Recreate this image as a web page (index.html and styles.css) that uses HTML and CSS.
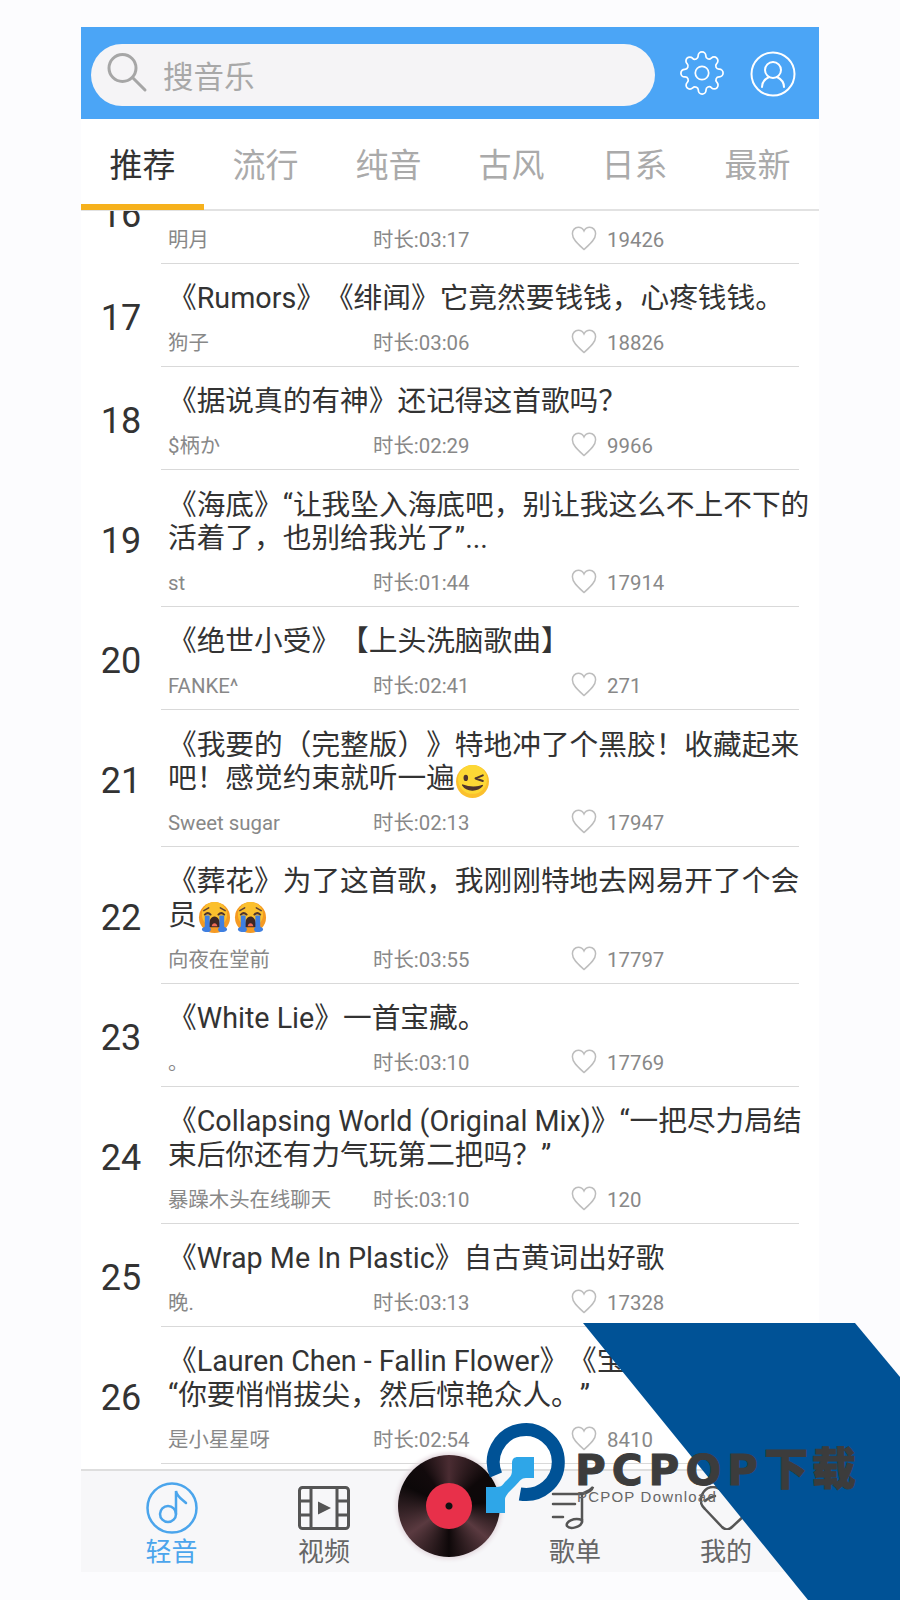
FILE: index.html
```html
<!DOCTYPE html>
<html lang="zh-CN">
<head>
    <meta charset="UTF-8">
    <meta name="viewport" content="width=device-width, initial-scale=1.0">
    <title>轻音</title>
    <link rel="stylesheet" href="styles.css">
</head>
<body>
    <svg class="sprites" width="0" height="0">
        <symbol id="heart" viewBox="0 0 26 25">
            <path d="M13 23.500C8 19 1.400 14 1.400 7.800 1.400 4 4 1.300 7.300 1.300c2.500 0 4.500 1.300 5.700 3.700 1.200-2.400 3.200-3.700 5.700-3.700 3.300 0 5.900 2.700 5.900 6.500 0 6.200-6.600 11.200-11.600 15.700z" fill="none" stroke="#bdbdbd" stroke-width="1.500"/>
        </symbol>
        <symbol id="wink" viewBox="0 0 34 34">
            <circle cx="17" cy="17" r="16" fill="#fbc02d"/>
            <circle cx="17" cy="15" r="14" fill="#fdd835"/>
            <ellipse cx="10.500" cy="13.500" rx="2.200" ry="3" fill="#4e342e"/>
            <path d="M20 14l7-3M20 14l7 2.500" stroke="#4e342e" stroke-width="2" fill="none" stroke-linecap="round"/>
            <path d="M7.500 20.500c4 6 14 6.500 19 .5-5.500 2-13 2-19-.5z" fill="#4e342e" stroke="#4e342e" stroke-width="1.500" stroke-linejoin="round"/>
        </symbol>
        <symbol id="cry" viewBox="0 0 34 34">
            <circle cx="17" cy="17" r="16" fill="#f59a23"/>
            <circle cx="17" cy="14" r="13" fill="#fbc02d"/>
            <path d="M6 10l5-3M28 10l-5-3" stroke="#5d4037" stroke-width="1.600" stroke-linecap="round"/>
            <path d="M7 14q3-3 6 0M21 14q3-3 6 0" stroke="#4e342e" stroke-width="2" fill="none" stroke-linecap="round"/>
            <path d="M11 27c0-7 2.500-11 6-11s6 4 6 11z" fill="#3e2723"/>
            <path d="M14 26c.5-2 1.500-3 3-3s2.500 1 3 3z" fill="#ef6c57"/>
            <path d="M7 15h5v12c2 1 2 5-2 5-3 0-6-1-6-3 0-1.500 3-2 3-3z" fill="#3f7fe0"/>
            <path d="M27 15h-5v12c-2 1-2 5 2 5 3 0 6-1 6-3 0-1.500-3-2-3-3z" fill="#3f7fe0"/>
        </symbol>
    </svg>

    <div class="app">
        <header class="top-bar">
            <div class="search-box">
                <svg class="search-icon" width="42" height="42" viewBox="0 0 42 42">
                    <circle cx="16.500" cy="16" r="13.500" fill="none" stroke="#a6a6a6" stroke-width="3"/>
                    <path d="M27 26l12 12" stroke="#a6a6a6" stroke-width="3" stroke-linecap="round"/>
                </svg>
                <span class="search-text">搜音乐</span>
            </div>
            <svg class="gear-icon" width="46" height="46" viewBox="0 0 24 24" fill="none" stroke="#fff" stroke-width=".9" stroke-linejoin="round">
                <circle cx="12" cy="12" r="3.500"/>
                <path d="M19.400 15a1.650 1.650 0 0 0 .33 1.820l.06.06a2 2 0 0 1 0 2.830 2 2 0 0 1-2.830 0l-.06-.06a1.650 1.650 0 0 0-1.820-.33 1.650 1.650 0 0 0-1 1.510V21a2 2 0 0 1-2 2 2 2 0 0 1-2-2v-.09A1.650 1.650 0 0 0 9 19.400a1.650 1.650 0 0 0-1.820.33l-.06.06a2 2 0 0 1-2.830 0 2 2 0 0 1 0-2.830l.06-.06a1.650 1.650 0 0 0 .33-1.820 1.650 1.650 0 0 0-1.510-1H3a2 2 0 0 1-2-2 2 2 0 0 1 2-2h.09A1.650 1.650 0 0 0 4.600 9a1.650 1.650 0 0 0-.33-1.820l-.06-.06a2 2 0 0 1 0-2.830 2 2 0 0 1 2.830 0l.06.06a1.650 1.650 0 0 0 1.820.33H9a1.650 1.650 0 0 0 1-1.510V3a2 2 0 0 1 2-2 2 2 0 0 1 2 2v.09a1.650 1.650 0 0 0 1 1.510 1.650 1.650 0 0 0 1.820-.33l.06-.06a2 2 0 0 1 2.830 0 2 2 0 0 1 0 2.830l-.06.06a1.650 1.650 0 0 0-.33 1.820V9a1.650 1.650 0 0 0 1.510 1H21a2 2 0 0 1 2 2 2 2 0 0 1-2 2h-.09a1.650 1.650 0 0 0-1.510 1z"/>
            </svg>
            <svg class="user-icon" width="46" height="46" viewBox="0 0 46 46" fill="none" stroke="#fff" stroke-width="2">
                <circle cx="23" cy="23" r="21.500"/>
                <circle cx="23" cy="19" r="8"/>
                <path d="M12 36c0-5 3-8 7-10M34 36c0-5-3-8-7-10" stroke-linecap="round"/>
            </svg>
        </header>

        <nav class="tabs">
            <div class="tab active">推荐</div>
            <div class="tab">流行</div>
            <div class="tab">纯音</div>
            <div class="tab">古风</div>
            <div class="tab">日系</div>
            <div class="tab">最新</div>
        </nav>

        <main class="list">
            <div class="list-inner">
                <div class="song">
                    <div class="num">16</div>
                    <div class="song-body">
                        <div class="song-title">&nbsp;</div>
                        <div class="meta"><span class="author">明月</span><span class="time">时长:03:17</span><svg class="like"><use href="#heart"/></svg><span>19426</span></div>
                    </div>
                </div>
                <div class="song">
                    <div class="num">17</div>
                    <div class="song-body">
                        <div class="song-title">《Rumors》《绯闻》它竟然要钱钱，心疼钱钱。</div>
                        <div class="meta"><span class="author">狗子</span><span class="time">时长:03:06</span><svg class="like"><use href="#heart"/></svg><span>18826</span></div>
                    </div>
                </div>
                <div class="song">
                    <div class="num">18</div>
                    <div class="song-body">
                        <div class="song-title">《据说真的有神》还记得这首歌吗？</div>
                        <div class="meta"><span class="author">$柄か</span><span class="time">时长:02:29</span><svg class="like"><use href="#heart"/></svg><span>9966</span></div>
                    </div>
                </div>
                <div class="song">
                    <div class="num">19</div>
                    <div class="song-body">
                        <div class="song-title">《海底》“让我坠入海底吧，别让我这么不上不下的<br>活着了，也别给我光了”...</div>
                        <div class="meta"><span class="author">st</span><span class="time">时长:01:44</span><svg class="like"><use href="#heart"/></svg><span>17914</span></div>
                    </div>
                </div>
                <div class="song">
                    <div class="num">20</div>
                    <div class="song-body">
                        <div class="song-title">《绝世小受》【上头洗脑歌曲】</div>
                        <div class="meta"><span class="author">FANKE^</span><span class="time">时长:02:41</span><svg class="like"><use href="#heart"/></svg><span>271</span></div>
                    </div>
                </div>
                <div class="song">
                    <div class="num">21</div>
                    <div class="song-body">
                        <div class="song-title">《我要的（完整版）》特地冲了个黑胶！收藏起来<br>吧！感觉约束就听一遍<svg class="emoji wink"><use href="#wink"/></svg></div>
                        <div class="meta"><span class="author">Sweet sugar</span><span class="time">时长:02:13</span><svg class="like"><use href="#heart"/></svg><span>17947</span></div>
                    </div>
                </div>
                <div class="song">
                    <div class="num">22</div>
                    <div class="song-body">
                        <div class="song-title">《葬花》为了这首歌，我刚刚特地去网易开了个会<br>员<svg class="emoji"><use href="#cry"/></svg><svg class="emoji"><use href="#cry"/></svg></div>
                        <div class="meta"><span class="author">向夜在堂前</span><span class="time">时长:03:55</span><svg class="like"><use href="#heart"/></svg><span>17797</span></div>
                    </div>
                </div>
                <div class="song">
                    <div class="num">23</div>
                    <div class="song-body">
                        <div class="song-title">《White Lie》一首宝藏。</div>
                        <div class="meta"><span class="author">。</span><span class="time">时长:03:10</span><svg class="like"><use href="#heart"/></svg><span>17769</span></div>
                    </div>
                </div>
                <div class="song">
                    <div class="num">24</div>
                    <div class="song-body">
                        <div class="song-title">《Collapsing World (Original Mix)》“一把尽力局结<br>束后你还有力气玩第二把吗？”</div>
                        <div class="meta"><span class="author">暴躁木头在线聊天</span><span class="time">时长:03:10</span><svg class="like"><use href="#heart"/></svg><span>120</span></div>
                    </div>
                </div>
                <div class="song">
                    <div class="num">25</div>
                    <div class="song-body">
                        <div class="song-title">《Wrap Me In Plastic》自古黄词出好歌</div>
                        <div class="meta"><span class="author">晚.</span><span class="time">时长:03:13</span><svg class="like"><use href="#heart"/></svg><span>17328</span></div>
                    </div>
                </div>
                <div class="song">
                    <div class="num">26</div>
                    <div class="song-body">
                        <div class="song-title">《Lauren Chen - Fallin Flower》《宝<br>“你要悄悄拔尖，然后惊艳众人。”</div>
                        <div class="meta"><span class="author">是小星星呀</span><span class="time">时长:02:54</span><svg class="like"><use href="#heart"/></svg><span>8410</span></div>
                    </div>
                </div>
            </div>
        </main>

        <footer class="bottom-nav">
            <div class="nav-item current">
                <svg width="52" height="52" viewBox="0 0 52 52" fill="none" stroke="#4ba5ec" stroke-width="2.500">
                    <circle cx="26" cy="26" r="24.500"/>
                    <circle cx="22" cy="32" r="8"/>
                    <path d="M30 32V9c1 6 6 8 10 12" stroke-linecap="round"/>
                </svg>
                <span>轻音</span>
            </div>
            <div class="nav-item">
                <svg width="52" height="44" viewBox="0 0 52 44" fill="none" stroke="#555" stroke-width="3">
                    <rect x="1.500" y="1.500" width="49" height="41" rx="3"/>
                    <path d="M13 2v40M39 2v40M2 15h11M2 29h11M39 15h11M39 29h11"/>
                    <path d="M20 15.500l13 6.500-13 6.500z" fill="#555" stroke="none"/>
                </svg>
                <span>视频</span>
            </div>
            <div class="nav-item">
                <div class="disc"><div class="disc-label"></div></div>
            </div>
            <div class="nav-item">
                <svg width="52" height="44" viewBox="0 0 52 44" fill="none" stroke="#555" stroke-width="2.500" stroke-linecap="round">
                    <path d="M4 8h28M4 18h22M4 31h10"/>
                    <path d="M33 36V8c3-2 8-3 11-7-1 4-6 6-11 7"/>
                    <path d="M33 36c-1 5-12 8-15 4-2-4 7-9 15-6"/>
                </svg>
                <span>歌单</span>
            </div>
            <div class="nav-item">
                <svg width="52" height="44" viewBox="0 0 52 44" fill="none" stroke="#555" stroke-width="2.500" stroke-linecap="round">
                    <path d="M13 1C5 1 0 9 1 16c0 3 2 5 4 7l17 18c3 3 7 3 10 0l14-13c4-4 4-8 0-12L22 5c-3-3-6-4-9-4z"/>
                    <path d="M5 15c3-3 6-4 10-5"/>
                </svg>
                <span>我的</span>
            </div>
        </footer>
    </div>

    <div class="watermark">
        <svg class="wm-art" width="900" height="1600" viewBox="0 0 900 1600">
            <path d="M583 1323H855L900 1377V1600H808z" fill="#005296"/>
            <path d="M496 1475A32.500 32.500 0 1 1 520 1494" fill="none" stroke="#005296" stroke-width="13"/>
            <path d="M518 1457H534V1478H526C521 1478 520 1481 516 1485L509 1492C506 1496 505 1497 505 1500V1513H486V1487H497C502 1487 503 1484 506 1481L509 1478C511 1476 512 1474 512 1470V1463C512 1459 514 1457 518 1457z" fill="#2ea6e8"/>
        </svg>
        <div class="wm-name">PCPOP<span class="wm-cn">下载</span></div>
        <div class="wm-sub">PCPOP Download</div>
    </div>
</body>
</html>
```

FILE: styles.css
```css
html, body {
    height: 100%;
}

body {
    margin: 0;
    background: #fcfcfe;
    color: #333;
    font-family: Roboto, "Noto Sans CJK SC", sans-serif;
    overflow: hidden;
    position: relative;
}

.sprites {
    position: absolute;
}

.app {
    width: 738px;
    height: 1545px;
    margin: 27px 0 0 81px;
    background: #fff;
    display: flex;
    flex-direction: column;
}

.top-bar {
    height: 92px;
    flex: none;
    background: #4ba5f6;
    display: flex;
    align-items: center;
    padding-left: 10px;
}

.search-box {
    width: 564px;
    height: 62px;
    box-sizing: border-box;
    border-radius: 31px;
    background: #f5f4f6;
    display: flex;
    align-items: center;
    padding-left: 15px;
    margin-top: 4px;
}

.search-icon {
    margin-top: -4px;
}

.search-text {
    font-size: 30.5px;
    color: #a8a8a8;
    margin-left: 15px;
}

.gear-icon {
    margin-left: 24px;
}

.user-icon {
    margin-left: 25px;
    margin-top: 1px;
}

.tabs {
    height: 92px;
    flex: none;
    box-sizing: border-box;
    border-bottom: 2px solid #e2e2e2;
    display: grid;
    grid-template-columns: repeat(6, 1fr);
}

.tab {
    font-size: 33px;
    color: #aaa;
    text-align: center;
    line-height: 94px;
    height: 90px;
    box-sizing: border-box;
}

.tab.active {
    color: #333;
    border-bottom: 6px solid #f6b11c;
    height: 91px;
}

.list {
    flex: 1;
    overflow: hidden;
    min-height: 0;
}

.list-inner {
    margin-top: -50px;
}

.song {
    display: flex;
}

.num {
    width: 80px;
    flex: none;
    font-size: 36px;
    color: #333;
    display: flex;
    align-items: center;
    justify-content: center;
    padding-top: 4px;
    box-sizing: border-box;
}

.song-body {
    width: 638px;
    box-sizing: border-box;
    padding: 18.3px 0 9px 7px;
    border-bottom: 1px solid #d9d9d9;
}

.song-title {
    font-size: 28.7px;
    line-height: 33.8px;
    color: #333;
    white-space: nowrap;
    text-spacing-trim: space-all;
}

.emoji {
    width: 33px;
    height: 33px;
    margin: -4px 1.5px;
    vertical-align: -5px;
}

.emoji.wink {
    width: 35px;
    height: 35px;
    margin: -6px 0;
}

.meta {
    margin-top: 13px;
    height: 28px;
    font-size: 20.4px;
    line-height: 28px;
    color: #888;
    display: flex;
    align-items: center;
}

.author {
    width: 205px;
    flex: none;
}

.time {
    width: 198px;
    flex: none;
}

.like {
    width: 26px;
    height: 25px;
    margin: -3px 10px 0 0;
}

.bottom-nav {
    height: 103px;
    flex: none;
    box-sizing: border-box;
    background: #f7f7f9;
    border-top: 2px solid #dedede;
    display: grid;
    grid-template-columns: 181px 124px 125px 128px 174px;
}

.nav-item {
    display: flex;
    flex-direction: column;
    align-items: center;
    font-size: 26px;
    line-height: 34px;
    color: #666;
}

.nav-item svg {
    display: block;
    margin: 15px 0 5px;
}

.nav-item.current {
    color: #4ba5ec;
}

.nav-item.current svg {
    margin: 11px 0 1px;
}

.disc {
    width: 102px;
    height: 102px;
    margin-top: -16px;
    border-radius: 50%;
    background: conic-gradient(#4a2c32 0deg, #0e0809 50deg, #0c0809 85deg, #5a3a40 130deg, #0e0809 180deg, #5a3a40 235deg, #0c0809 295deg, #120a0c 325deg, #4a2c32 360deg);
    box-shadow: 0 0 4px 2px #e3d8de;
    display: flex;
    align-items: center;
    justify-content: center;
    z-index: 2;
}

.disc-label {
    width: 46px;
    height: 46px;
    border-radius: 50%;
    background: radial-gradient(circle, #111 0, #111 3px, #e8304a 4px);
}

.watermark {
    position: absolute;
    left: 0;
    top: 0;
    width: 900px;
    height: 1600px;
    z-index: 3;
    pointer-events: none;
}

.wm-art {
    position: absolute;
    left: 0;
    top: 0;
}

.wm-name {
    position: absolute;
    left: 575px;
    top: 1438px;
    font-family: "DejaVu Sans", "Noto Sans CJK SC", sans-serif;
    font-weight: 700;
    font-size: 42px;
    line-height: 56px;
    letter-spacing: 6px;
    color: #3c3c3c;
    -webkit-text-stroke: 1px #3c3c3c;
    white-space: nowrap;
}

.wm-cn {
    font-size: 44px;
    letter-spacing: 4px;
    font-family: "Noto Sans CJK SC", sans-serif;
    font-weight: 900;
}

.wm-sub {
    position: absolute;
    left: 577px;
    top: 1487px;
    font-family: "Liberation Sans", sans-serif;
    font-size: 15px;
    line-height: 20px;
    letter-spacing: 1.2px;
    color: #666;
    white-space: nowrap;
}
```
